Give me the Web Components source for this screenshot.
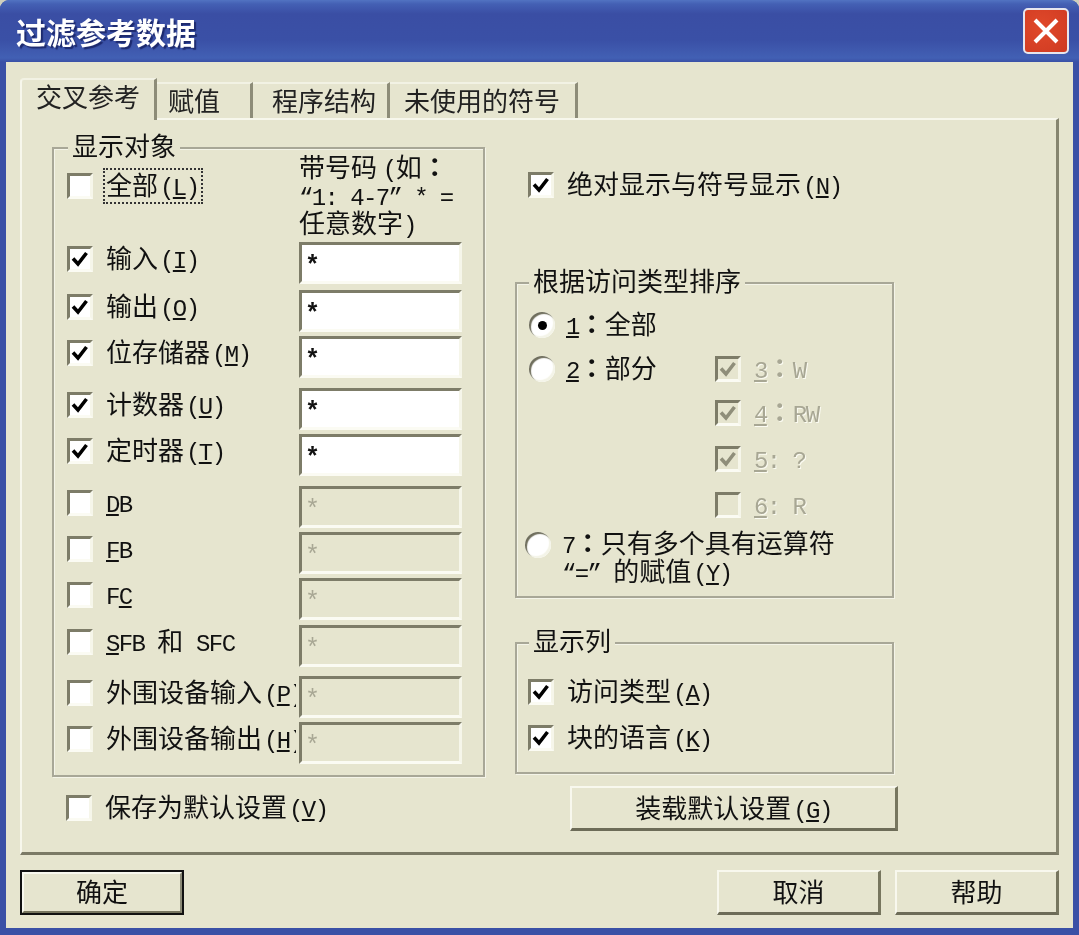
<!DOCTYPE html>
<html lang="zh-CN">
<head>
<meta charset="utf-8">
<title>过滤参考数据</title>
<style>
    html, body { margin: 0; padding: 0; background: #cfcfbd; }
    body { font-family: "Noto Sans CJK SC", sans-serif; font-size: 26px; color: #111; }
</style>
</head>
<body>
<ui-dialog caption="过滤参考数据">
    <ui-tabs>
        <ui-tab active width="137" pad="14">交叉参考</ui-tab>
        <ui-tab width="96" pad="11">赋值</ui-tab>
        <ui-tab width="137" pad="19">程序结构</ui-tab>
        <ui-tab width="188" pad="14">未使用的符号</ui-tab>
    </ui-tabs>
    <ui-panel>
        <ui-column slot="left">
            <ui-group caption="显示对象" style="--pad:0 0 0 13px;--legend-left:14px">
                <ui-objects>
                    <ui-check slot="all" focused>全部<ui-key>L</ui-key></ui-check>
                    <ui-hint slot="all-hint">带号码 <ui-lat>(</ui-lat>如<ui-colon>：</ui-colon><br><ui-lat>“1:&nbsp;4-7”&nbsp;*&nbsp;=</ui-lat><br>任意数字<ui-lat>)</ui-lat></ui-hint>
                    <ui-check checked>输入<ui-key>I</ui-key></ui-check><ui-field>*</ui-field>
                    <ui-check checked>输出<ui-key>O</ui-key></ui-check><ui-field>*</ui-field>
                    <ui-check checked>位存储器<ui-key>M</ui-key></ui-check><ui-field>*</ui-field>
                    <ui-check checked>计数器<ui-key>U</ui-key></ui-check><ui-field>*</ui-field>
                    <ui-check checked>定时器<ui-key>T</ui-key></ui-check><ui-field>*</ui-field>
                    <ui-check><ui-lat><u>D</u>B</ui-lat></ui-check><ui-field disabled>*</ui-field>
                    <ui-check><ui-lat><u>F</u>B</ui-lat></ui-check><ui-field disabled>*</ui-field>
                    <ui-check><ui-lat>F<u>C</u></ui-lat></ui-check><ui-field disabled>*</ui-field>
                    <ui-check><ui-lat><u>S</u>FB&nbsp;</ui-lat>和<ui-lat>&nbsp;SFC</ui-lat></ui-check><ui-field disabled>*</ui-field>
                    <ui-check clip>外围设备输入<ui-key>P</ui-key></ui-check><ui-field disabled>*</ui-field>
                    <ui-check clip>外围设备输出<ui-key>H</ui-key></ui-check><ui-field disabled>*</ui-field>
                </ui-objects>
            </ui-group>
            <ui-check style="margin:14px 0 0 14px">保存为默认设置<ui-key>V</ui-key></ui-check>
        </ui-column>
        <ui-column slot="right">
            <ui-check checked style="margin:21px 0 0 13px">绝对显示与符号显示<ui-key>N</ui-key></ui-check>
            <ui-group caption="根据访问类型排序" style="--pad:24px 0 0 12px;--legend-left:12px;height:316px;margin-top:80px">
                <ui-sorting>
                    <ui-radio slot="r1" checked><ui-lat><u>1</u></ui-lat><ui-colon>：</ui-colon>全部</ui-radio>
                    <ui-radio slot="r2"><ui-lat><u>2</u></ui-lat><ui-colon>：</ui-colon>部分</ui-radio>
                    <ui-check slot="s3" checked disabled><ui-lat><u>3</u></ui-lat><ui-colon>：</ui-colon><ui-lat>W</ui-lat></ui-check>
                    <ui-check slot="s4" checked disabled><ui-lat><u>4</u></ui-lat><ui-colon>：</ui-colon><ui-lat>RW</ui-lat></ui-check>
                    <ui-check slot="s5" checked disabled><ui-lat><u>5</u>:&nbsp;?</ui-lat></ui-check>
                    <ui-check slot="s6" disabled><ui-lat><u>6</u>:&nbsp;R</ui-lat></ui-check>
                    <ui-radio slot="r7" style="--lh:28px;--shift:0px;margin-left:-4px"><ui-lat>7</ui-lat><ui-colon>：</ui-colon>只有多个具有运算符<br><ui-lat>“=”&nbsp;</ui-lat>的赋值<ui-key>Y</ui-key></ui-radio>
                </ui-sorting>
            </ui-group>
            <ui-group caption="显示列" style="--pad:31px 0 0 11px;--legend-left:12px;height:132px;margin-top:44px">
                <ui-check checked style="margin-bottom:12px">访问类型<ui-key>A</ui-key></ui-check>
                <ui-check checked>块的语言<ui-key>K</ui-key></ui-check>
            </ui-group>
            <ui-button style="width:328px;margin:12px 0 0 55px">装载默认设置<ui-key>G</ui-key></ui-button>
        </ui-column>
    </ui-panel>
    <ui-actions>
        <ui-button default slot="start">确定</ui-button>
        <ui-button slot="end">取消</ui-button>
        <ui-button slot="end">帮助</ui-button>
    </ui-actions>
</ui-dialog>

<script>
// small helper, every element is just a shadow root with its own style
function shadow(el, html) {
    el.attachShadow({mode: 'open'});
    el.shadowRoot.innerHTML = html;
}

class UiDialog extends HTMLElement {
    constructor() {
        super();
        shadow(this, `
            <style>
                :host {
                    display: flex;
                    flex-direction: column;
                    box-sizing: border-box;
                    width: 1079px;
                    height: 935px;
                    overflow: hidden;
                    border-radius: 9px 9px 0 0;
                    background: #3a50a6;
                    filter: blur(.6px);
                }
                .bar {
                    display: flex;
                    flex: none;
                    align-items: center;
                    justify-content: space-between;
                    height: 62px;
                    padding: 0 10px 0 16px;
                    background: linear-gradient(#5273c2 0, #4460b4 4px, #3a4ea4 14px, #3a50a6 40px, #4260b4 58px, #3a50a6 62px);
                    color: #fff;
                    font: bold 30px/1 "Noto Sans CJK SC", sans-serif;
                    text-shadow: 2px 2px 1px #1d2a6e;
                }
                .close {
                    display: flex;
                    align-items: center;
                    justify-content: center;
                    box-sizing: border-box;
                    width: 46px;
                    height: 46px;
                    border: 2px solid #e6e6ee;
                    border-radius: 5px;
                    background: radial-gradient(circle at 40% 40%, #e0492a, #cf3a22);
                }
                .close svg { display: block; }
                .client {
                    display: flex;
                    flex: 1;
                    flex-direction: column;
                    min-height: 0;
                    margin: 0 6px 7px;
                    padding: 16px 14px 13px;
                    background: #e6e5cf;
                }
            </style>
            <div class="bar">
                <span></span>
                <div class="close">
                    <svg width="30" height="30" viewBox="0 0 30 30"><path d="M4 4L26 26M26 4L4 26" stroke="#fff" stroke-width="4" fill="none"/></svg>
                </div>
            </div>
            <div class="client"><slot></slot></div>
        `);
        this.shadowRoot.querySelector('.bar span').textContent = this.getAttribute('caption');
    }
}

class UiTabs extends HTMLElement {
    constructor() {
        super();
        shadow(this, `
            <style>
                :host { display: flex; align-items: flex-end; position: relative; z-index: 1; height: 42px; margin-bottom: -2px; }
            </style>
            <slot></slot>
        `);
    }
}

class UiTab extends HTMLElement {
    constructor() {
        super();
        shadow(this, `
            <style>
                :host {
                    display: block;
                    box-sizing: border-box;
                    height: 36px;
                    margin-bottom: 2px;
                    border-top: 2px solid #f2f2e4;
                    border-right: 3px solid #8d8c78;
                    line-height: 32px;
                    white-space: nowrap;
                    color: #222;
                }
                :host([active]) {
                    height: 42px;
                    margin-bottom: 0;
                    border-left: 2px solid #f7f7ec;
                    border-radius: 4px 0 0 0;
                    background: #e6e5cf;
                    line-height: 32px;
                }
            </style>
            <slot></slot>
        `);
        this.style.width = this.getAttribute('width') + 'px';
        this.style.paddingLeft = this.getAttribute('pad') + 'px';
    }
}

class UiPanel extends HTMLElement {
    constructor() {
        super();
        shadow(this, `
            <style>
                :host {
                    display: grid;
                    flex: none;
                    grid-template-columns: 433px 379px;
                    column-gap: 30px;
                    align-content: start;
                    box-sizing: border-box;
                    height: 737px;
                    padding: 27px 0 0 30px;
                    border: 2px solid;
                    border-color: #f7f7ec #86856f #7b7a66 #f7f7ec;
                    border-right-width: 3px;
                    border-bottom-width: 3px;
                }
            </style>
            <slot name="left"></slot>
            <slot name="right"></slot>
        `);
    }
}

class UiColumn extends HTMLElement {
    constructor() {
        super();
        shadow(this, `
            <style>:host { display: block; }</style>
            <slot></slot>
        `);
    }
}

class UiGroup extends HTMLElement {
    constructor() {
        super();
        shadow(this, `
            <style>
                :host {
                    display: block;
                    position: relative;
                    box-sizing: border-box;
                    padding: var(--pad, 0);
                    border: 2px solid #a8a797;
                    box-shadow: inset 1px 1px 0 #f4f4e8, 1px 1px 0 #f4f4e8;
                }
                .legend {
                    position: absolute;
                    top: -19px;
                    left: var(--legend-left, 14px);
                    padding: 0 4px;
                    background: #e6e5cf;
                    line-height: 30px;
                    white-space: nowrap;
                }
            </style>
            <div class="legend"></div>
            <slot></slot>
        `);
        this.shadowRoot.querySelector('.legend').textContent = this.getAttribute('caption');
    }
}

class UiObjects extends HTMLElement {
    constructor() {
        super();
        shadow(this, `
            <style>
                :host {
                    display: grid;
                    grid-template-columns: 229px 163px;
                    column-gap: 3px;
                    grid-template-rows: 93px 48px 46px 52px 46px 52px 46px 46px 47px 51px 46px 46px 7px;
                    align-items: start;
                }
                .head { padding-top: 20px; }
            </style>
            <div class="head"><slot name="all"></slot></div>
            <div><slot name="all-hint"></slot></div>
            <slot></slot>
        `);
    }
}

class UiHint extends HTMLElement {
    constructor() {
        super();
        shadow(this, `
            <style>
                :host { display: block; padding-top: 3px; line-height: 28px; white-space: nowrap; }
            </style>
            <slot></slot>
        `);
    }
}

class UiSorting extends HTMLElement {
    constructor() {
        super();
        shadow(this, `
            <style>
                :host {
                    display: grid;
                    grid-template-columns: 186px auto;
                    grid-template-rows: 44px 44px 46px 46px 40px auto;
                    grid-template-areas: "r1 ." "r2 s3" ". s4" ". s5" ". s6" "r7 r7";
                }
                slot { display: block; }
                slot[name=r1] { grid-area: r1; }
                slot[name=r2] { grid-area: r2; }
                slot[name=s3] { grid-area: s3; }
                slot[name=s4] { grid-area: s4; }
                slot[name=s5] { grid-area: s5; }
                slot[name=s6] { grid-area: s6; }
                slot[name=r7] { grid-area: r7; }
            </style>
            <slot name="r1"></slot><slot name="r2"></slot>
            <slot name="s3"></slot><slot name="s4"></slot><slot name="s5"></slot><slot name="s6"></slot>
            <slot name="r7"></slot>
        `);
    }
}

class UiCheck extends HTMLElement {
    constructor() {
        super();
        shadow(this, `
            <style>
                :host {
                    display: flex;
                    align-items: center;
                    gap: 13px;
                    height: 34px;
                    white-space: nowrap;
                }
                :host([clip]) { overflow-x: clip; }
                :host([disabled]) .text { color: #a8a794; text-shadow: 1px 1px 0 #fbfbf2; }
                :host([focused]) .text { margin-left: -3px; padding: 0 3px 0 1px; border: 2px dotted #333; line-height: 28px; }
                .box {
                    display: flex;
                    flex: none;
                    box-sizing: border-box;
                    width: 26px;
                    height: 26px;
                    border: 3px solid;
                    border-color: #7d7c68 #f6f6ea #fbfbf3 #7d7c68;
                    background: #fff;
                }
                :host([disabled]) .box { background: #e6e5cf; }
                svg { display: none; }
                :host([checked]) svg { display: block; }
                :host([disabled]) path { stroke: #8f8e7a; }
                /* text sits 2px above the box centre */
                .text { line-height: 30px; padding-bottom: 4px; }
                :host([focused]) .text { padding-bottom: 4px; }
            </style>
            <div class="box">
                <svg width="20" height="20" viewBox="0 0 20 20"><path d="M3 9.5L8 15L16.5 4" stroke="#000" stroke-width="3.6" fill="none"/></svg>
            </div>
            <div class="text"><slot></slot></div>
        `);
    }
}

class UiRadio extends HTMLElement {
    constructor() {
        super();
        shadow(this, `
            <style>
                :host {
                    display: flex;
                    align-items: flex-start;
                    gap: 11px;
                    white-space: nowrap;
                }
                .dot {
                    display: flex;
                    flex: none;
                    align-items: center;
                    justify-content: center;
                    width: 26px;
                    height: 26px;
                    margin-top: 4px;
                    border-radius: 50%;
                    background: #fff;
                    box-shadow: inset 2px 2px 1px #6f6e5c, inset -2px -2px 1px #f4f4e8;
                }
                .dot i { display: none; width: 9px; height: 9px; border-radius: 50%; background: #000; }
                :host([checked]) .dot i { display: block; }
                .text { margin-top: var(--shift, -2px); line-height: var(--lh, 34px); }
            </style>
            <div class="dot"><i></i></div>
            <div class="text"><slot></slot></div>
        `);
    }
}

class UiField extends HTMLElement {
    constructor() {
        super();
        shadow(this, `
            <style>
                :host {
                    display: block;
                    box-sizing: border-box;
                    height: 42px;
                    padding: 5px 0 0 3px;
                    border: 3px solid;
                    border-color: #7d7c68 #f6f6ea #fbfbf3 #7d7c68;
                    background: #fff;
                    font: bold 25px/34px "Liberation Mono", monospace;
                    color: #111;
                }
                :host([disabled]) { background: #e6e5cf; color: #a8a794; font-weight: normal; }
            </style>
            <slot></slot>
        `);
    }
}

class UiButton extends HTMLElement {
    constructor() {
        super();
        shadow(this, `
            <style>
                :host {
                    display: flex;
                    align-items: center;
                    justify-content: center;
                    box-sizing: border-box;
                    width: 164px;
                    height: 45px;
                    padding-bottom: 3px;
                    border: 2px solid;
                    border-color: #f8f8ee #77765f #6d6c58 #f8f8ee;
                    border-bottom-width: 3px;
                    border-right-width: 3px;
                    white-space: nowrap;
                }
                :host([default]) {
                    outline: 2px solid #111;
                    outline-offset: -2px;
                    border: 4px solid;
                    border-color: #f8f8ee #8b8a76 #77765f #f8f8ee;
                }
                span { line-height: 30px; }
            </style>
            <span><slot></slot></span>
        `);
    }
}

class UiActions extends HTMLElement {
    constructor() {
        super();
        shadow(this, `
            <style>
                :host { display: flex; justify-content: space-between; margin-top: 15px; }
                .end { display: flex; gap: 14px; }
            </style>
            <slot name="start"></slot>
            <div class="end"><slot name="end"></slot></div>
        `);
    }
}

// half width latin text, the dialog font has latin at half of the cjk cell
// no whitespace in these templates, they are inline and it would show up
// line-height 0 so they never make the line box taller
class UiLat extends HTMLElement {
    constructor() {
        super();
        shadow(this, `<style>:host { font: 24px/0 "Liberation Mono", monospace; letter-spacing: -1.6px; }</style><slot></slot>`);
    }
}

// mnemonic such as (L)
class UiKey extends HTMLElement {
    constructor() {
        super();
        shadow(this, `<style>:host { margin-left: 2px; font: 24px/0 "Liberation Mono", monospace; letter-spacing: -1.6px; }</style>(<u><slot></slot></u>)`);
    }
}

// full width colon centred in its cell, the TC forms have that
class UiColon extends HTMLElement {
    constructor() {
        super();
        shadow(this, `<style>:host { font-weight: 700; }</style><span lang="zh-TW" style="font-family:'Noto Sans CJK TC',sans-serif"><slot></slot></span>`);
    }
}

customElements.define('ui-dialog', UiDialog);
customElements.define('ui-tabs', UiTabs);
customElements.define('ui-tab', UiTab);
customElements.define('ui-panel', UiPanel);
customElements.define('ui-column', UiColumn);
customElements.define('ui-group', UiGroup);
customElements.define('ui-objects', UiObjects);
customElements.define('ui-hint', UiHint);
customElements.define('ui-sorting', UiSorting);
customElements.define('ui-check', UiCheck);
customElements.define('ui-radio', UiRadio);
customElements.define('ui-field', UiField);
customElements.define('ui-button', UiButton);
customElements.define('ui-actions', UiActions);
customElements.define('ui-lat', UiLat);
customElements.define('ui-key', UiKey);
customElements.define('ui-colon', UiColon);
</script>
</body>
</html>
